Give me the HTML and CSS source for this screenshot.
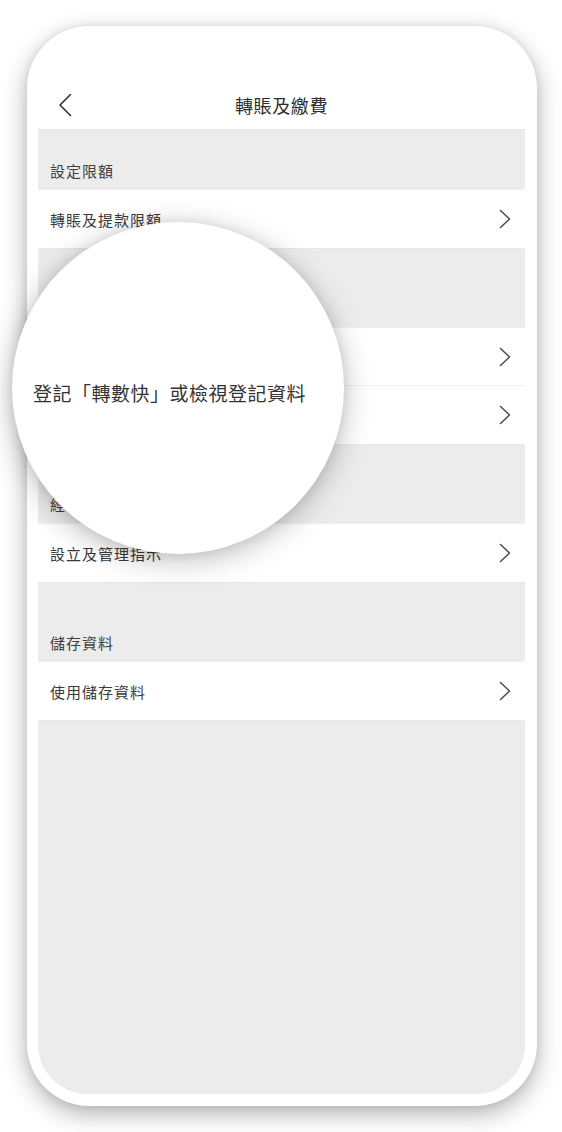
FILE: index.html
```html
<!DOCTYPE html>
<html lang="zh-Hant">
<head>
<meta charset="utf-8">
<title>轉賬及繳費</title>
<link rel="stylesheet" href="styles.css">
</head>
<body>
<div class="phone">
  <div class="screen">
    <header class="topbar">
      <svg class="back" width="14" height="24" viewBox="0 0 14 24"><path d="M12.5 1.5 L2 12 L12.5 22.5" fill="none" stroke="#333" stroke-width="1.6" stroke-linecap="round" stroke-linejoin="round"/></svg>
      <h1 class="title">轉賬及繳費</h1>
    </header>

    <div class="section first"><span class="label">設定限額</span></div>
    <div class="row"><span class="text">轉賬及提款限額</span><svg class="chev" width="12" height="20" viewBox="0 0 12 20"><path d="M1.5 1.5 L10.5 10 L1.5 18.5" fill="none" stroke="#4a4a4a" stroke-width="1.5" stroke-linecap="round" stroke-linejoin="round"/></svg></div>

    <div class="section"><span class="label">轉數快</span></div>
    <div class="row divided"><span class="text">設定「轉數快」收款</span><svg class="chev" width="12" height="20" viewBox="0 0 12 20"><path d="M1.5 1.5 L10.5 10 L1.5 18.5" fill="none" stroke="#4a4a4a" stroke-width="1.5" stroke-linecap="round" stroke-linejoin="round"/></svg></div>
    <div class="row"><span class="text">登記「轉數快」或檢視登記資料</span><svg class="chev" width="12" height="20" viewBox="0 0 12 20"><path d="M1.5 1.5 L10.5 10 L1.5 18.5" fill="none" stroke="#4a4a4a" stroke-width="1.5" stroke-linecap="round" stroke-linejoin="round"/></svg></div>

    <div class="section"><span class="label">經常性付款指示（包括自動轉賬）</span></div>
    <div class="row"><span class="text">設立及管理指示</span><svg class="chev" width="12" height="20" viewBox="0 0 12 20"><path d="M1.5 1.5 L10.5 10 L1.5 18.5" fill="none" stroke="#4a4a4a" stroke-width="1.5" stroke-linecap="round" stroke-linejoin="round"/></svg></div>

    <div class="section"><span class="label">儲存資料</span></div>
    <div class="row"><span class="text">使用儲存資料</span><svg class="chev" width="12" height="20" viewBox="0 0 12 20"><path d="M1.5 1.5 L10.5 10 L1.5 18.5" fill="none" stroke="#4a4a4a" stroke-width="1.5" stroke-linecap="round" stroke-linejoin="round"/></svg></div>

    <div class="fill"></div>
  </div>

  <div class="magnifier"><span class="mag-text">登記「轉數快」或檢視登記資料</span></div>
</div>
</body>
</html>
```

FILE: styles.css
```css
* { box-sizing: border-box; }

html, body {
  margin: 0;
  padding: 0;
  background: #ffffff;
}

body {
  width: 562px;
  height: 1132px;
  overflow: hidden;
  font-family: "Noto Sans CJK TC", "Noto Sans", sans-serif;
  padding: 26px 0 0 27px;
}

.phone {
  position: relative;
  width: 510px;
  height: 1080px;
  background: #ffffff;
  border-radius: 62px;
  padding: 12px 12px 12px 11px;
  box-shadow: 0 8px 24px rgba(0, 0, 0, 0.30), 0 0 8px rgba(0, 0, 0, 0.08);
}

.screen {
  height: 100%;
  border-radius: 50px;
  overflow: hidden;
  background: #ececec;
  display: flex;
  flex-direction: column;
}

.topbar {
  flex: 0 0 91px;
  background: #ffffff;
  display: flex;
  align-items: center;
  justify-content: center;
  padding-top: 42px;
  position: relative;
}

.back {
  position: absolute;
  left: 20px;
  top: 55px;
}

.title {
  margin: 0;
  font-size: 18px;
  font-weight: 400;
  color: #2e2e2e;
  letter-spacing: 0.6px;
}

.section {
  flex: 0 0 79px;
  background: #ececec;
  display: flex;
  align-items: flex-end;
  padding: 0 12px 8px;
  border-top: 1px solid #e6e6e6;
}

.section.first {
  flex-basis: 60px;
}

.label {
  font-size: 15px;
  line-height: 20px;
  color: #404040;
  letter-spacing: 1px;
}

.row {
  flex: 0 0 59px;
  background: #ffffff;
  display: flex;
  align-items: center;
  justify-content: space-between;
  padding: 0 14px 0 12px;
  border-top: 1px solid #f0f0f0;
}

.row.divided {
  flex-basis: 58px;
}

.text {
  font-size: 15px;
  color: #3a3a3a;
  letter-spacing: 1px;
}

.chev {
  display: block;
}

.fill {
  flex: 1;
  background: #ececec;
  border-top: 1px solid #e6e6e6;
}

.magnifier {
  position: absolute;
  left: -15px;
  top: 196px;
  width: 332px;
  height: 332px;
  border-radius: 50%;
  background: #ffffff;
  box-shadow: 0 6px 30px rgba(0, 0, 0, 0.26), 0 0 12px rgba(0, 0, 0, 0.08);
  display: flex;
  align-items: center;
  padding-left: 21px;
  padding-top: 8px;
}

.mag-text {
  font-size: 19px;
  letter-spacing: 0.5px;
  color: #333333;
  white-space: nowrap;
}
```
